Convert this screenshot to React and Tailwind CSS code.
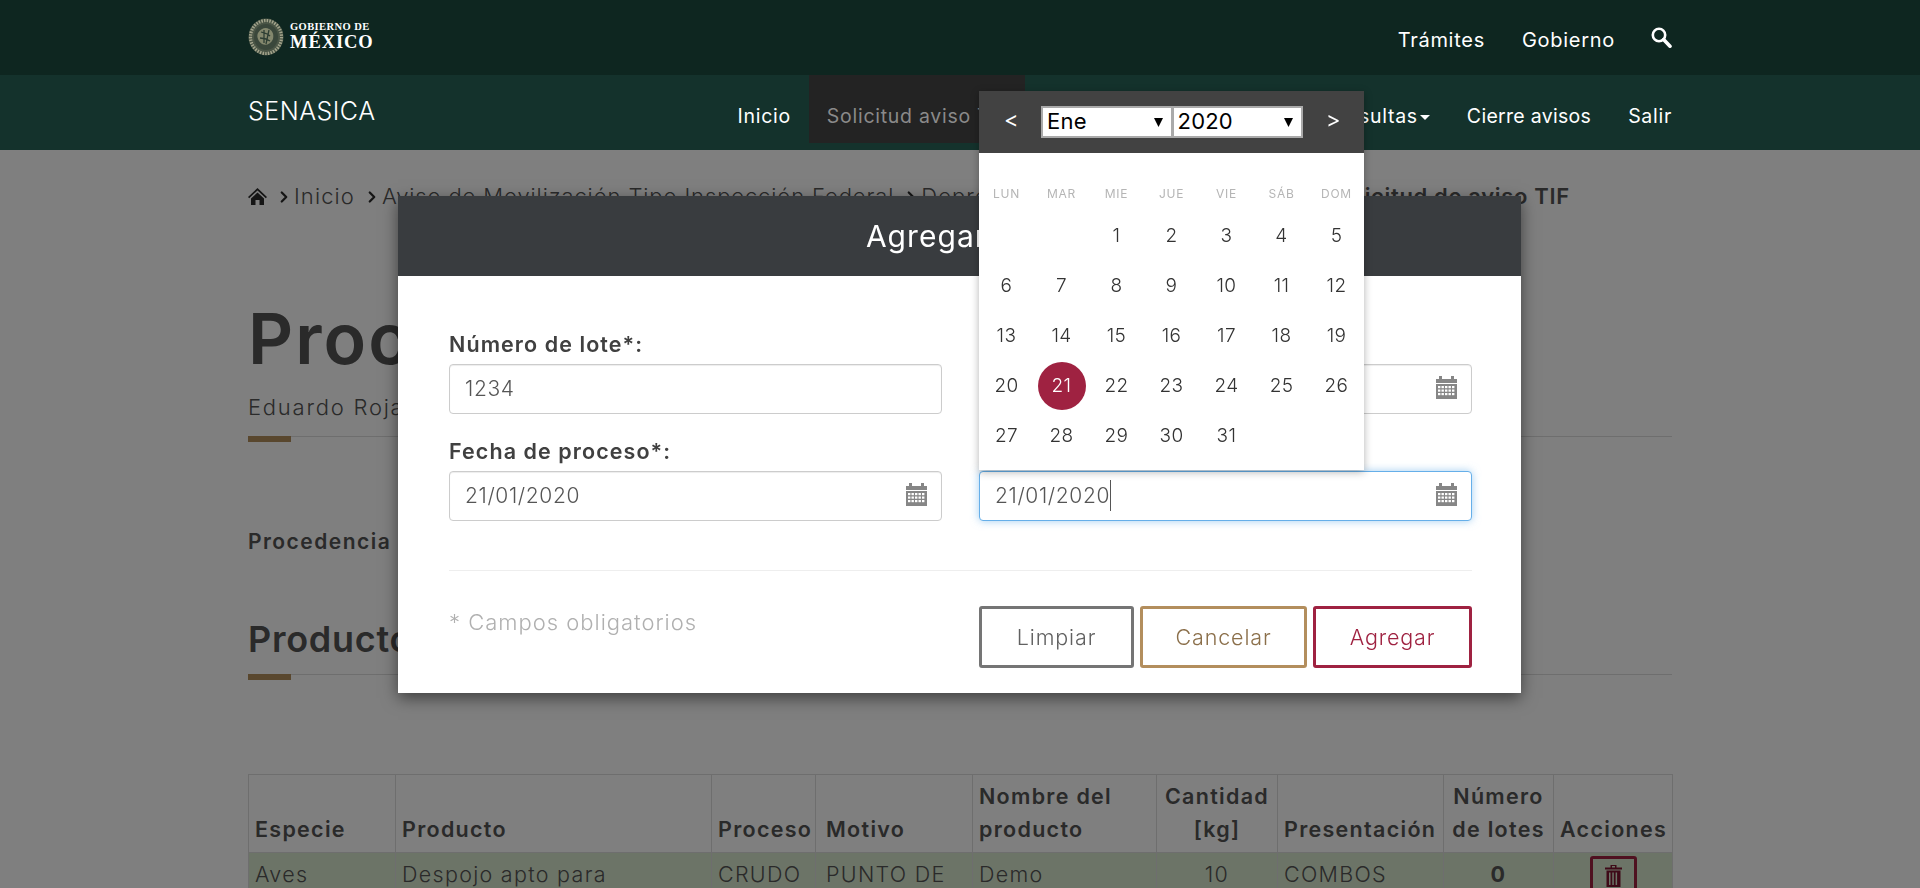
import React from "react";
import { ChevronRight } from "lucide-react";

const weekDays = ["LUN", "MAR", "MIE", "JUE", "VIE", "SÁB", "DOM"];
const days = ["", "", 1, 2, 3, 4, 5, 6, 7, 8, 9, 10, 11, 12, 13, 14, 15, 16, 17, 18, 19, 20, 21, 22, 23, 24, 25, 26, 27, 28, 29, 30, 31];

const columns = [
  { label: "Especie", w: "w-[147px]" },
  { label: "Producto", w: "w-[316px]" },
  { label: "Proceso", w: "w-[104px]" },
  { label: "Motivo", w: "w-[157px]", pad: "pl-[10px]" },
  { label: "Nombre del producto", w: "w-[184px]" },
  { label: "Cantidad [kg]", w: "w-[121px]", center: true },
  { label: "Presentación", w: "w-[166px]" },
  { label: "Número de lotes", w: "w-[110px]", center: true },
  { label: "Acciones", w: "w-[119px]", center: true },
];

const row = [
  { text: "Aves" },
  { text: "Despojo apto para" },
  { text: "CRUDO" },
  { text: "PUNTO DE", cls: "pl-[10px]" },
  { text: "Demo" },
  { text: "10", cls: "text-center" },
  { text: "COMBOS" },
  { text: "0", cls: "text-center font-bold" },
];

function CalendarIcon() {
  return (
    <svg width="21" height="23" viewBox="0 0 21 23" className="shrink-0 -mt-[3px] -mr-[1px]">
      <path d="M0 3h3V0h3v3h9V0h3v3h3v4H0z" fill="#868686" />
      <path d="M0 8h21v15H0z" fill="#868686" />
      <g fill="#fff">
        {[2, 5.5, 9, 12.5, 16].map((x) =>
          [10, 13.5, 17].map((y) => <rect key={x + "-" + y} x={x} y={y} width="2.4" height="2.2" />)
        )}
      </g>
    </svg>
  );
}

function SearchIcon() {
  return (
    <svg width="21" height="21" viewBox="0 0 21 21" fill="none" stroke="#fff">
      <circle cx="8" cy="8" r="6.2" strokeWidth="2.6" />
      <path d="M12.6 12.6l6.4 6.6" strokeWidth="3.6" strokeLinecap="round" />
    </svg>
  );
}

function HomeIcon() {
  return (
    <svg width="19" height="19" viewBox="0 0 19 19" className="shrink-0">
      <path d="M9.5 1L0 10l1.2 1.2 8.3-7.8 8.3 7.8L19 10z" fill="#2a2a2a" />
      <path d="M3 11.5l6.5-6 6.5 6V18h-4.500v-5h-4v5H3z" fill="#2a2a2a" />
    </svg>
  );
}

function TrashIcon() {
  return (
    <svg width="17" height="22" viewBox="0 0 17 22" fill="#7d1430">
      <path d="M5.500 0h6v2.500h5.500v2H0v-2h5.500zM7 1v1.500h3V1z" fillRule="evenodd" />
      <path d="M1.500 5.500h14V22h-14zM4 7.500v12.500h1.500V7.500zm3.300 0v12.500h1.500V7.500zm3.300 0v12.500h1.500V7.500z" fillRule="evenodd" />
    </svg>
  );
}

function Emblem() {
  return (
    <svg width="36" height="38" viewBox="0 0 36 38" className="shrink-0">
      <ellipse cx="18" cy="19" rx="17.500" ry="18.500" fill="#4a5546" />
      <ellipse cx="18" cy="19" rx="15.500" ry="16.500" fill="none" stroke="#a3a48c" strokeWidth="3.200" strokeDasharray="1.500 1.200" />
      <ellipse cx="18" cy="19" rx="12" ry="13" fill="#3a473b" />
      <path d="M10 15c3-5 8-6 11-4 4 2 5 6 4 10-2 5-7 7-11 5-3-2-6-7-4-11z" fill="#83876d" />
      <path d="M13 14c3 1 6 1 9 4M12 20c3 0 7 1 10 3M16 12v13M21 12l-3 14" stroke="#2c3d33" strokeWidth="1.300" fill="none" />
    </svg>
  );
}

function Field({ label, value }) {
  return (
    <div>
      <div className="h-[34px] text-[21.500px] font-semibold text-[#404040] leading-[28px] -mt-[6px] tracking-[0.05em]">{label || "\u00a0"}</div>
      <div className="flex items-center h-[50px] border border-[#cccccc] rounded-[4px] pl-[15px] pr-[15px] bg-white shadow-[inset_0_1px_1px_rgba(0,0,0,0.075)]">
        <input
          readOnly
          value={value}
          className="w-full min-w-0 outline-none bg-transparent text-[21px] font-light text-[#555555] tracking-[0.03em]"
        />
        {value !== "1234" && <CalendarIcon />}
      </div>
    </div>
  );
}

function Calendar() {
  return (
    <div className="absolute left-[581px] top-[-105px] w-[385px] h-[379px] bg-white shadow-[0_2px_8px_rgba(0,0,0,0.3)]">
      <div className="flex items-center justify-between h-[62px] bg-[#424242] px-[26px] text-white text-[22px] tracking-normal">
        <span className="w-[12px] text-center -mt-[6px] -ml-[1px]">&lt;</span>
        <div className="flex h-[32px] w-[261px] -mt-[1px] ml-[3px]">
          {["Ene", "2020"].map((v) => (
            <div key={v} className="flex-1 flex items-center justify-between bg-white border-2 border-[#aaaaaa] -ml-px pl-[4px] pr-[8px] text-black text-[22px] tracking-[0.01em]">
              <span>{v}</span>
              <svg width="9" height="10" viewBox="0 0 9 10"><path d="M0 1h9L4.500 10z" fill="#000" /></svg>
            </div>
          ))}
        </div>
        <span className="w-[12px] text-center -mt-[6px]">&gt;</span>
      </div>
      <div className="grid grid-cols-7 pt-[23px] text-center">
        {weekDays.map((d) => (
          <div key={d} className="h-[35px] text-[12px] text-[#b5b5b5] leading-[35px]">{d}</div>
        ))}
        {days.map((d, i) => (
          <div key={i} className="flex items-center justify-center h-[50px] text-[19px] font-light text-[#333333] tracking-[0.02em]">
            {d === 21 ? (
              <span className="flex items-center justify-center w-[48px] h-[48px] rounded-full bg-[#9f2241] text-white">{d}</span>
            ) : (
              d
            )}
          </div>
        ))}
      </div>
    </div>
  );
}

function Modal() {
  return (
    <div className="fixed inset-0 z-40">
      <div className="relative mt-[196px] ml-[398px] w-[1123px] h-[497px] bg-white shadow-[0_5px_15px_rgba(0,0,0,0.5)]">
        <div className="flex items-center justify-center h-[80px] bg-[#393c3f] text-white text-[30px] tracking-[0.035em]">Agregar lote</div>
        <div className="pl-[51px] pr-[49px] pt-[60px]">
          <div className="grid grid-cols-2 gap-x-[37px] gap-y-[29px]">
            <Field label="Número de lote*:" value="1234" />
            <Field label="" value="" />
            <Field label="Fecha de proceso*:" value="21/01/2020" />
            <div>
              <div className="h-[28px]" />
              <div className="flex items-center h-[50px] border border-[#66afe9] rounded-[4px] px-[15px] bg-white shadow-[0_0_8px_rgba(102,175,233,0.6)]">
                <span className="flex-1 text-[21px] font-light text-[#555555] tracking-[0.03em]">
                  <span className="border-r border-[#555555] py-[3px]">21/01/2020</span>
                </span>
                <CalendarIcon />
              </div>
            </div>
          </div>
          <div className="mt-[49px] border-t border-[#eeeeee] flex items-start justify-between pt-[35px]">
            <div className="text-[22px] font-light text-[#b0b0b0] tracking-[0.045em]">* Campos obligatorios</div>
            <div className="flex gap-[6px] text-[21.500px] font-light tracking-[0.04em]">
              <button className="w-[155px] h-[62px] border-[3px] border-[#757575] rounded-[3px] text-[#616161]">Limpiar</button>
              <button className="w-[167px] h-[62px] border-[3px] border-[#b38e5d] rounded-[3px] text-[#8b6f4a]">Cancelar</button>
              <button className="w-[159px] h-[62px] border-[3px] border-[#9f2241] rounded-[3px] text-[#9f2241]">Agregar</button>
            </div>
          </div>
        </div>
        <Calendar />
      </div>
    </div>
  );
}

function SectionRule() {
  return (
    <div className="relative h-px bg-[#dddddd]">
      <div className="absolute left-0 top-0 w-[43px] h-[6px] bg-[#b38e5d]" />
    </div>
  );
}

function Chevron() {
  return <ChevronRight className="w-[18px] h-[18px] ml-[8px] mr-[1px] shrink-0" strokeWidth={3} color="#2a2a2a" />;
}

export default function App() {
  return (
    <div className="relative h-[888px] overflow-hidden bg-white font-[Inter,sans-serif] text-[#545454] tracking-[0.045em]">
      <header className="relative z-30 text-white">
        <div className="h-[75px] bg-[#0e2620]">
          <div className="mx-auto w-[1424px] h-full flex items-center justify-between">
            <div className="flex items-center gap-[6px] -mt-[2px]">
              <Emblem />
              <div className="font-['Liberation_Serif',serif] font-bold leading-none">
                <div className="text-[10.500px] tracking-[0.04em]">GOBIERNO DE</div>
                <div className="text-[18.500px] tracking-[0.05em] mt-[1px]">MÉXICO</div>
              </div>
            </div>
            <div className="flex items-center text-[20px] mt-[4px]">
              <span>Trámites</span>
              <span className="ml-[37px]">Gobierno</span>
              <span className="ml-[36px] -mt-[5px]"><SearchIcon /></span>
            </div>
          </div>
        </div>
        <div className="h-[75px] bg-[#14322c]">
          <div className="mx-auto w-[1424px] h-full flex">
            <div className="text-[25px] font-light pt-[18px] tracking-[0.02em]">SENASICA</div>
            <nav className="ml-auto flex text-[19.500px] h-[68px] leading-[83px]">
              <span className="mr-[18px]">Inicio</span>
              <span className="w-[216px] pl-[18px] bg-[#232323] text-[#8a8a8a] whitespace-nowrap overflow-hidden">Solicitud aviso TIF</span>
              <span className="w-[405px] text-right">Consultas<span className="inline-block align-middle ml-[2px] w-0 h-0 border-x-[5px] border-x-transparent border-t-[5px] border-t-white" /></span>
              <span className="ml-[37px] tracking-[0.015em]">Cierre avisos</span>
              <span className="ml-[37px]">Salir</span>
            </nav>
          </div>
        </div>
      </header>

      <main className="mx-auto w-[1424px]">
        <div className="flex items-center h-[33px] mt-[30px] text-[22px] font-light tracking-[0.05em]">
          <HomeIcon />
          <Chevron />
          <span>Inicio</span>
          <Chevron />
          <span className="whitespace-nowrap tracking-[0.04em]">Aviso de Movilización Tipo Inspección Federal</span>
          <Chevron />
          <span className="w-[408px] whitespace-nowrap">Depre</span>
          <span className="font-semibold whitespace-nowrap tracking-[0.03em]">Solicitud de aviso TIF</span>
        </div>

        <h1 className="mt-[81px] h-[90px] text-[70px] leading-[90px] font-semibold tracking-[0.03em]">Procedencia</h1>
        <div className="mt-[8px] h-[30px] text-[22px] font-light leading-[30px] tracking-[0.08em] whitespace-nowrap">Eduardo Rojas</div>
        <div className="mt-[14px]"><SectionRule /></div>

        <div className="mt-[90px] h-[30px] text-[21px] font-semibold leading-[30px] tracking-[0.07em]">Procedencia</div>

        <h2 className="mt-[57px] h-[50px] text-[36px] font-semibold leading-[50px]">Productos</h2>
        <div className="mt-[10px]"><SectionRule /></div>

        <table className="mt-[99px] w-full table-fixed border-collapse text-[21.500px] tracking-[0.06em]">
          <thead>
            <tr className="h-[78px]">
              {columns.map((c) => (
                <th key={c.label} className={`${c.w} ${c.center ? "text-center" : "text-left"} ${c.pad || ""} align-bottom border border-[#dddddd] px-[6px] pb-[6px] font-semibold text-[#545454] leading-[33px]`}>
                  {c.label}
                </th>
              ))}
            </tr>
          </thead>
          <tbody>
            <tr className="bg-[#d9e9cf] font-light">
              {row.map((c) => (
                <td key={c.text} className={`border border-[#dddddd] px-[6px] pt-[5px] align-top ${c.cls || ""}`}>{c.text}</td>
              ))}
              <td className="border border-[#dddddd] px-[6px] pt-[5px] align-top text-center">
                <button className="inline-flex items-start justify-center w-[47px] h-[52px] pt-[6px] -mt-[2px] border-[3px] border-[#9f2241] rounded-[3px]">
                  <TrashIcon />
                </button>
              </td>
            </tr>
          </tbody>
        </table>
      </main>

      <div className="fixed inset-0 z-20 bg-black/50" />
      <Modal />
    </div>
  );
}
